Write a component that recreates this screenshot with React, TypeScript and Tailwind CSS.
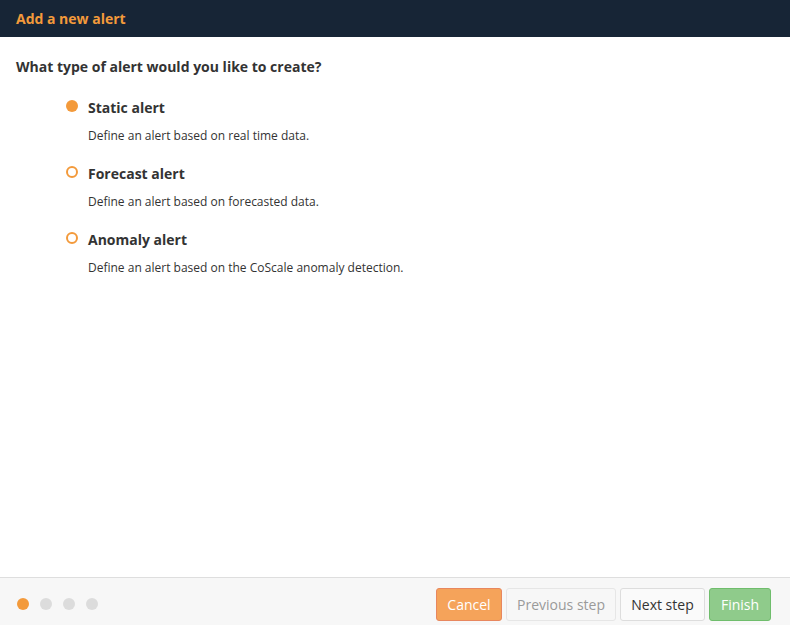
import React from "react";

const options = [
  { title: "Static alert", desc: "Define an alert based on real time data.", checked: true },
  { title: "Forecast alert", desc: "Define an alert based on forecasted data.", checked: false },
  { title: "Anomaly alert", desc: "Define an alert based on the CoScale anomaly detection.", checked: false },
];

export default function App() {
  return (
    <div
      className="w-[790px] h-[625px] flex flex-col bg-white text-[#333]"
      style={{ fontFamily: '"Open Sans", sans-serif' }}
    >
      <div className="h-[37px] bg-[#172536] flex items-center px-4">
        <span className="text-[14px] font-bold text-[#f39a3b]">Add a new alert</span>
      </div>
      <div className="flex-1 px-4 pt-5">
        <div className="text-[14px] leading-5 font-bold text-[#333]">What type of alert would you like to create?</div>
        <div className="mt-[21px] ml-[50px] flex flex-col gap-[19px]">
          {options.map((o) => (
            <div key={o.title} className="flex flex-col">
              <div className="flex items-center">
                <span
                  className={
                    o.checked
                      ? "w-3 h-3 rounded-full bg-[#f39a3b] -mt-[4px]"
                      : "w-3 h-3 rounded-full border-2 border-[#f39a3b] -mt-[4px]"
                  }
                />
                <span className="ml-[10px] text-[14px] leading-5 font-bold text-[#333]">{o.title}</span>
              </div>
              <div className="ml-[22px] mt-[9px] text-[12px] leading-[18px] text-[#333]">{o.desc}</div>
            </div>
          ))}
        </div>
      </div>
      <div className="h-[48px] border-t border-[#dedede] bg-[#f7f7f7] flex items-center justify-between pt-[5px] pl-[17px] pr-[19px]">
        <div className="flex items-center gap-[11px]">
          <span className="w-3 h-3 rounded-full bg-[#f39a3b]" />
          <span className="w-3 h-3 rounded-full bg-[#dcdcdc]" />
          <span className="w-3 h-3 rounded-full bg-[#dcdcdc]" />
          <span className="w-3 h-3 rounded-full bg-[#dcdcdc]" />
        </div>
        <div className="flex items-center gap-[4px]">
          <button className="h-[33px] w-[66px] flex items-center justify-center rounded-[3px] border border-[#e8875e] bg-[#f5a35a] text-white text-[14px]">Cancel</button>
          <button className="h-[33px] w-[110px] flex items-center justify-center rounded-[3px] border border-[#e6e6e6] bg-[#f7f7f7] text-[#9a9a9a] text-[14px]">Previous step</button>
          <button className="h-[33px] w-[85px] flex items-center justify-center rounded-[3px] border border-[#dddddd] bg-[#fafafa] text-[#333] text-[14px]">Next step</button>
          <button className="h-[33px] w-[62px] flex items-center justify-center rounded-[3px] border border-[#6fbd6c] bg-[#8fcb8b] text-white text-[14px]">Finish</button>
        </div>
      </div>
    </div>
  );
}
